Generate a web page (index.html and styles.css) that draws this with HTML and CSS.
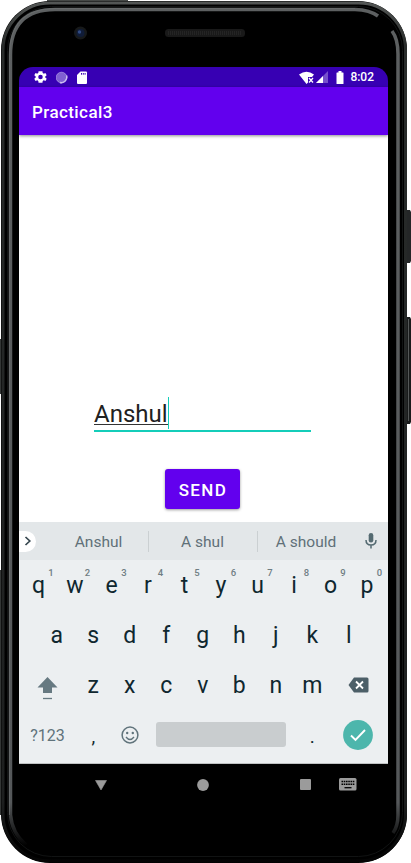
FILE: index.html
```html
<!DOCTYPE html>
<html lang="en">
<head>
<meta charset="utf-8">
<title>Practical3</title>
<link rel="stylesheet" href="styles.css">
</head>
<body>
<div class="device">
  <svg class="frame" width="411" height="863" viewBox="0 0 411 863" aria-hidden="true">
    <defs>
      <linearGradient id="fade" x1="0" y1="0" x2="0" y2="863" gradientUnits="userSpaceOnUse">
        <stop offset="0" stop-color="#5d6061"/><stop offset=".93" stop-color="#55585a"/><stop offset=".98" stop-color="#000"/>
      </linearGradient>
      <linearGradient id="rim" x1="0" y1="0" x2="0" y2="863" gradientUnits="userSpaceOnUse">
        <stop offset="0" stop-color="#565958"/><stop offset=".05" stop-color="#292c2b"/><stop offset=".93" stop-color="#1d1f1f"/><stop offset=".99" stop-color="#050505"/>
      </linearGradient>
    </defs>
    <path d="M0 339h3v55H0zM0 570h3v245H0z" fill="#333635"/>
    <path d="M405 210h5l1 2v49l-1 2h-5z" fill="#242627"/>
    <path d="M405 317h5l1 2v103l-1 2h-5z" fill="#191b1b"/>
    <path d="M408.500 319v102" stroke="#555858" stroke-width="1"/>
    <path d="M47 0h81v2H47z" fill="#454846"/>
    <rect x="1" y="1" width="406" height="862" rx="49" fill="#000"/>
    <rect x="3" y="3" width="402.500" height="858" rx="47" fill="none" stroke="url(#rim)" stroke-width="3"/>
    <rect x="7.500" y="6.500" width="395" height="850" rx="44" fill="none" stroke="#111313" stroke-width="1"/>
    <path d="M10.500 815V55Q10.500 9.500 55 9.500H355Q370 10 378 16M392 31Q398 39 398 54V815Q398 826 393 833M10.500 815Q12 833 26 845" fill="none" stroke="url(#fade)" stroke-width="3.500"/>
    <path d="M9.500 815V55Q9.500 8.500 55 8.500H355" fill="none" stroke="#727575" stroke-width=".8" opacity=".7"/>
    <circle cx="80.500" cy="33" r="6.500" fill="#17191a"/><circle cx="80.500" cy="33" r="4" fill="#101c38"/><circle cx="79.500" cy="32" r="1.700" fill="#314b83"/>
    <rect x="165" y="29" width="80" height="8" rx="3.500" fill="#191919"/>
    <path d="M168 33h74" stroke="#242424" stroke-width="4" stroke-dasharray="1 1"/>
  </svg>
  <main class="screen">
    <header class="status">
      <svg width="13" height="14" viewBox="2 2 20 20" fill="#fff"><path d="M19.430 13c.1-.700.1-1.300 0-2l2.100-1.600-2-3.500-2.500 1a8 8 0 0 0-1.700-1L15 3H9l-.4 2.900a8 8 0 0 0-1.700 1l-2.500-1-2 3.500L4.500 11c-.1.700-.1 1.300 0 2l-2.100 1.600 2 3.500 2.500-1a8 8 0 0 0 1.700 1L9 21h6l.4-2.900a8 8 0 0 0 1.700-1l2.500 1 2-3.500zM12 15.500a3.500 3.500 0 1 1 0-7 3.500 3.500 0 0 1 0 7z"/></svg>
      <svg width="12" height="13" viewBox="0 0 12 13"><circle cx="5.500" cy="6.500" r="5.500" fill="#8060d2"/><path d="M10.500 4.500A5.500 5.500 0 0 1 4 11.500" fill="none" stroke="#e4dcfa" stroke-width="1.400"/><circle cx="5.500" cy="6.500" r="5.300" fill="none" stroke="#b09be5" stroke-width=".6"/></svg>
      <svg width="11" height="13" viewBox="0 0 11 13"><path d="M3.500 .5H9q1 0 1 1V12q0 1-1 1H1q-1 0-1-1V4z" fill="#fff"/><path d="M4.500 2v1.700M6.300 2v1.700M8.100 2v1.700" stroke="#3700b3" stroke-width="1"/></svg>
      <span class="spacer"></span>
      <svg class="wifi" width="16" height="13" viewBox="0 0 16 13"><path d="M0 3.500Q7.500-2 15 3.500L13 6H9v5.500L7.500 13z" fill="#fff"/><path d="m10 7 4 4.500m0-4.500-4 4.500" stroke="#fff" stroke-width="1.300"/></svg>
      <svg class="signal" width="12" height="12" viewBox="0 0 12 12"><path d="M12 0v12H0z" fill="#7650cc"/><path d="M7 5v7H0z" fill="#fff"/></svg>
      <svg class="battery" width="8" height="13" viewBox="0 0 8 13"><path d="M2.500 0h3v1.500H7q.5 0 .5.500v10.500q0 .5-.5.500H1q-.5 0-.5-.5V2q0-.5.5-.5h1.500z" fill="#fff"/></svg>
      <span class="clock">8:02</span>
    </header>
    <div class="appbar">Practical3</div>
    <section class="content">
      <div class="field"><span class="typed">Anshul</span><i class="caret"></i></div>
      <button class="send">SEND</button>
    </section>
    <section class="suggest">
      <span class="expand"><svg width="8" height="10" viewBox="0 0 8 10"><path d="m1.500 1 4.300 4-4.300 4" fill="none" stroke="#37474f" stroke-width="1.700"/></svg></span>
      <span class="word first">Anshul</span><span class="word">A shul</span><span class="word last">A should</span>
      <svg class="mic" width="12" height="16" viewBox="0 0 12 16"><rect x="3.700" y="0" width="4.600" height="9.500" rx="2.300" fill="#546a71"/><path d="M1 7q0 5 5 5t5-5M6 12v3.500" fill="none" stroke="#546a71" stroke-width="1.500"/></svg>
    </section>
    <section class="keys">
      <div class="row"><b>q<sup>1</sup></b><b>w<sup>2</sup></b><b>e<sup>3</sup></b><b>r<sup>4</sup></b><b>t<sup>5</sup></b><b>y<sup>6</sup></b><b>u<sup>7</sup></b><b>i<sup>8</sup></b><b>o<sup>9</sup></b><b>p<sup>0</sup></b></div>
      <div class="row"><b>a</b><b>s</b><b>d</b><b>f</b><b>g</b><b>h</b><b>j</b><b>k</b><b>l</b></div>
      <div class="row">
        <b class="wide shift"><svg width="21" height="24" viewBox="0 0 21 24"><path d="M10.500 1 20.500 11.500H15V17H6v-5.500H.5z" fill="#667981"/><path d="M6 22.500h9" stroke="#667981" stroke-width="1.300"/></svg></b>
        <b>z</b><b>x</b><b>c</b><b>v</b><b>b</b><b>n</b><b>m</b>
        <b class="wide"><svg width="21" height="16" viewBox="0 0 21 16"><path d="M6 .5h13q1.500 0 1.500 1.500v12q0 1.500-1.500 1.500H6L.5 8z" fill="#4c5f68"/><path d="m8 4.500 7 7m0-7-7 7" stroke="#fff" stroke-width="1.800"/></svg></b>
      </div>
      <div class="row bottom">
        <b class="wide sym">?123</b><b class="punct">,</b>
        <b><svg width="18" height="18" viewBox="0 0 18 18"><circle cx="9" cy="9" r="7.900" fill="none" stroke="#60737b" stroke-width="1.500"/><circle cx="6.200" cy="7" r="1.200" fill="#60737b"/><circle cx="11.800" cy="7" r="1.200" fill="#60737b"/><path d="M5 11q4 5 8 0" fill="none" stroke="#60737b" stroke-width="1.400"/></svg></b>
        <span class="space"></span><b class="punct">.</b>
        <b class="wide"><svg width="30" height="30" viewBox="0 0 30 30"><circle cx="15" cy="15" r="14.900" fill="#4db6ac"/><path d="m8 15.500 4.500 4.500L22 10" fill="none" stroke="#fff" stroke-width="1.900"/></svg></b>
      </div>
    </section>
    <nav class="nav">
      <svg width="12" height="10" viewBox="0 0 12 10"><path d="M.5.5h11L6 10z" fill="#9b9b9b" stroke="#9b9b9b" stroke-width=".6" stroke-linejoin="round"/></svg>
      <svg class="home" width="12" height="12" viewBox="0 0 12 12"><circle cx="6" cy="6" r="5.900" fill="#9b9b9b"/></svg>
      <svg class="recent" width="11" height="11" viewBox="0 0 11 11"><rect width="11" height="11" rx="1" fill="#9b9b9b"/></svg>
      <svg class="board" width="18" height="13" viewBox="0 0 18 13"><rect width="17.500" height="12.500" rx="1.500" fill="#9b9b9b"/><path d="M2.500 3.500h13M2.500 6.300h13" stroke="#000" stroke-width="1.600" stroke-dasharray="1.600 .65"/><path d="M5.500 9.700h7" stroke="#000" stroke-width="1.300"/></svg>
    </nav>
  </main>
</div>
</body>
</html>
```
FILE: styles.css
```css
* { box-sizing: border-box; }
body { margin: 0; background: #fff; font-family: Roboto, sans-serif; overflow: hidden; }
svg { display: block; flex: none; }
.device { position: relative; width: 411px; height: 863px; padding: 67px 23px 58px 19px; }
.frame { position: absolute; left: 0; top: 0; }
.screen { position: relative; width: 369px; height: 738px; border-radius: 14px 14px 0 0; overflow: hidden; display: flex; flex-direction: column; }
.status { height: 20px; background: #3700b3; color: #fff; display: flex; align-items: center; padding: 0 14px 0 15px; gap: 9px; }
.spacer { flex: 1; }
.signal { margin-left: -8px; }
.battery { margin-left: -1px; }
.clock { font-size: 12px; font-weight: 500; line-height: 20px; margin-left: -3px; }
.appbar { position: relative; height: 48px; background: #6200ee; color: #fff; font-size: 17px; font-weight: 500; line-height: 50px; letter-spacing: .42px; padding-left: 13px; box-shadow: 0 1px 3px rgba(0,0,0,.45); }
.content { height: 387px; background: #fff; display: flex; flex-direction: column; align-items: flex-start; padding: 262px 0 0 75px; }
.field { width: 217px; height: 35px; border-bottom: 2px solid #14cdb9; display: flex; }
.typed { font-size: 24px; line-height: 34px; width: 74px; height: 28px; color: #212121; border-bottom: 1px solid #333; }
.caret { width: 1px; height: 32px; background: #14cdb9; }
.send { margin: 37px 0 0 71px; width: 75px; height: 40px; border: 0; padding: 1px 0 0 1px; border-radius: 3px; background: #6200ee; color: #fff; font: 500 17px Roboto, sans-serif; letter-spacing: 1.4px; box-shadow: 0 1px 3px rgba(0,0,0,.4); }
.suggest { height: 38px; background: #e3e7e9; display: flex; align-items: center; }
.expand { width: 17px; height: 21px; background: #fff; border-radius: 0 11px 11px 0; display: flex; align-items: center; padding-left: 5px; }
.word { width: 109px; height: 21px; border-right: 1px solid #cbd0d2; color: #607078; font-size: 15.500px; line-height: 22px; text-align: center; padding-right: 1px; }
.first { width: 113px; padding-left: 14px; }
.last { width: 97px; border: 0; }
.mic { margin-left: 10px; }
.keys { height: 204px; background: #eceff1; border-bottom: 1px solid #bfc2c3; display: flex; flex-direction: column; }
.row { height: 50px; display: flex; justify-content: center; padding-right: 1.500px; color: #0f272f; }
.row b { position: relative; width: 36.500px; padding-top: 2px; display: flex; align-items: center; justify-content: center; font-weight: 400; font-size: 23px; line-height: 48px; }
.row sup { position: absolute; left: 28px; top: 7px; font-size: 9.500px; line-height: 11px; font-weight: 500; color: #6f7d83; }
.row .wide { width: 55px; padding-top: 0; }
.row .shift { padding-top: 5px; }
.row .sym { font-size: 16px; padding-top: 2px; color: #60737b; }
.row .punct { font-size: 19px; padding-top: 4px; }
.bottom b:nth-of-type(3) { padding-top: 0; }
.space { width: 130px; height: 25px; margin: 12px 8px 0; background: #c9cdcf; border-radius: 3px; }
.nav { height: 41px; background: #000; display: flex; align-items: center; padding-left: 76px; }
.home { margin-left: 90px; }
.recent { margin-left: 91px; }
.board { margin-left: 28px; }
```
